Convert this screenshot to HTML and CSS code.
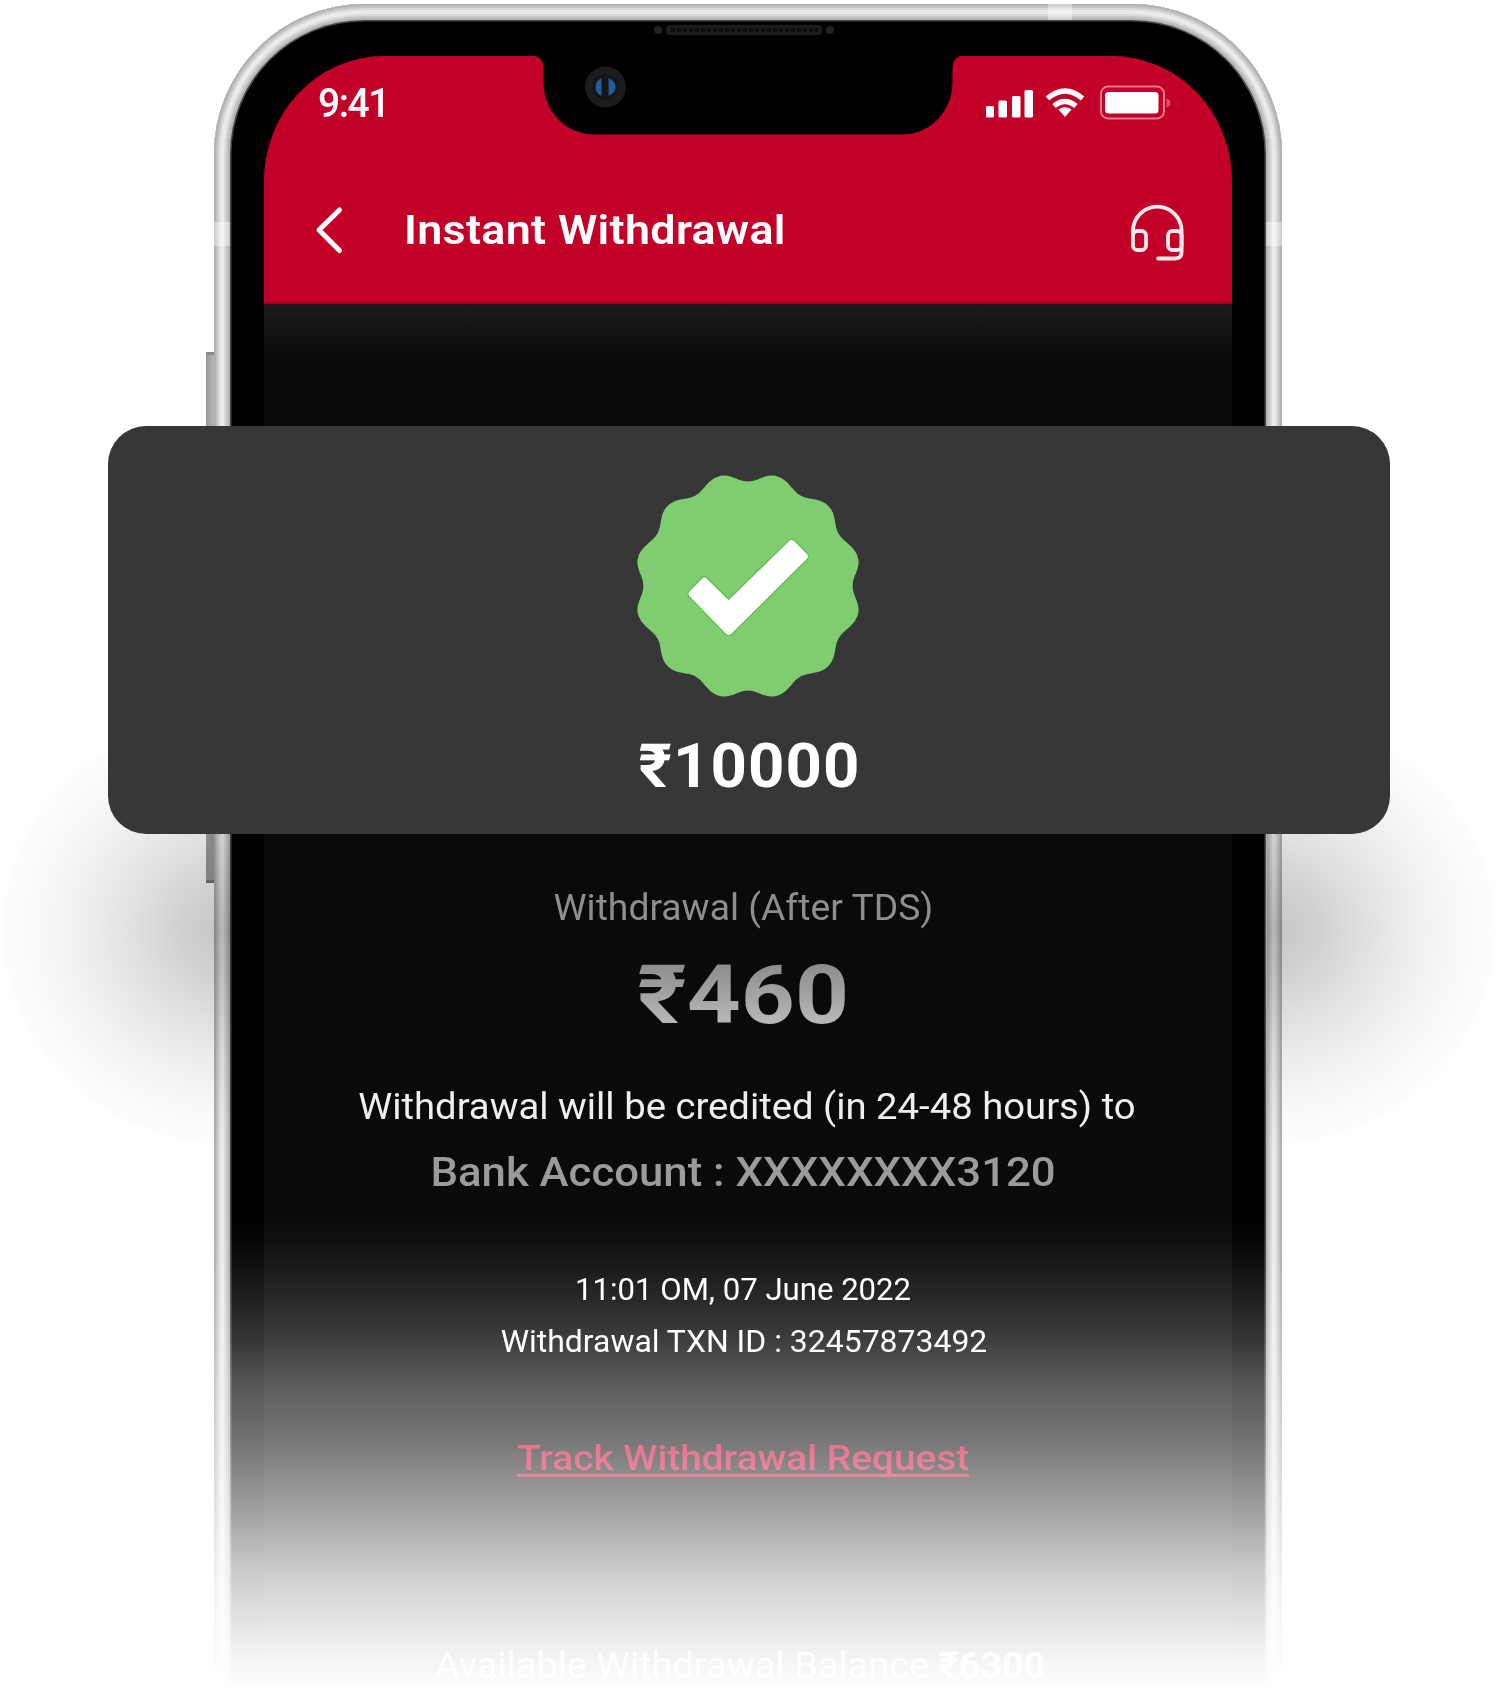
FILE: index.html
```html
<!DOCTYPE html>
<html lang="en">
<head>
<meta charset="utf-8">
<title>Instant Withdrawal</title>
<link rel="stylesheet" href="styles.css">
</head>
<body>
<main class="stage">
  <div class="phone-wrap">
    <i class="side-button side-button-up"></i>
    <i class="side-button side-button-down"></i>
    <div class="phone">
      <i class="antenna antenna-top"></i>
      <i class="antenna antenna-left"></i>
      <i class="antenna antenna-right"></i>
      <div class="screen">
        <header class="app-head">
          <div class="status">
            <span class="time">9:41</span>
            <svg class="status-icons" width="186" height="36" viewBox="985 84 186 36">
              <g fill="#fff">
                <rect x="986" y="106" width="8" height="11.5" rx="1.5"/>
                <rect x="998.5" y="100.500" width="8.500" height="17" rx="1.500"/>
                <rect x="1012" y="96" width="8.500" height="21.500" rx="1.500"/>
                <rect x="1024.500" y="90" width="8.500" height="27.500" rx="1.500"/>
                <path d="M1065 117l-6.500-7.500q6.500-4.500 13 0z"/>
                <rect x="1105" y="92" width="53.500" height="21.500" rx="3.500"/>
              </g>
              <g fill="none" stroke="#fff" stroke-width="5.400">
                <path d="M1047.500 98.500q17.500-15 35 0"/>
                <path d="M1054 106q11-9 22 0"/>
              </g>
              <rect x="1101" y="86.500" width="63" height="32" rx="7" fill="none" stroke="#e07c90" stroke-width="1.900"/>
              <path d="M1166.500 98.500q4 1.500 4 4.500t-4 4.500z" fill="#d8546e"/>
            </svg>
          </div>
          <div class="title-bar">
            <svg class="back" width="30" height="50" viewBox="314 206 30 50" fill="none" stroke="#fff" stroke-width="5" stroke-linecap="round" stroke-linejoin="round"><path d="M339.500 210L319 230l20.500 20.500"/></svg>
            <h1 class="title">Instant Withdrawal</h1>
            <svg class="headset" width="56" height="60" viewBox="1130 203 56 60" fill="none" stroke="#fbe9ec" stroke-width="3.800" stroke-linecap="round" stroke-linejoin="round">
              <path d="M1133 236v-6a24.300 24.300 0 0 1 48.600 0v21q0 6.500-6.500 6.500h-17"/>
              <rect x="1133" y="230" width="13" height="19" rx="4.500"/>
              <rect x="1168" y="230" width="13.500" height="19" rx="4.500"/>
            </svg>
          </div>
        </header>
        <section class="details">
          <p class="label">Withdrawal (After TDS)</p>
          <p class="net">₹460</p>
          <p class="credit">Withdrawal will be credited (in 24-48 hours) to</p>
          <p class="account">Bank Account : XXXXXXXX3120</p>
          <p class="meta date">11:01 OM, 07 June 2022</p>
          <p class="meta txn">Withdrawal TXN ID : 32457873492</p>
          <a class="track">Track Withdrawal Request</a>
          <p class="balance">Available Withdrawal Balance <b>₹6300</b></p>
        </section>
      </div>
      <svg class="notch" width="440" height="120" viewBox="530 20 440 120">
        <path d="M530 55.500q13.500 0 13.500 13v13c0 29 21 53 51 53h307c30 0 51-24 51-53v-13q0-13 13-13z"/>
        <rect x="666" y="25" width="156" height="10" rx="4" fill="#1b1b1b"/>
        <path d="M671 30h147" stroke="#0c0c0c" stroke-width="4" stroke-dasharray="4 2"/>
        <circle cx="658" cy="30" r="4" fill="#242021"/>
        <circle cx="830" cy="30" r="4" fill="#242021"/>
        <circle cx="605.500" cy="87" r="20.500" fill="#1c1c1c"/>
        <circle cx="605.500" cy="87" r="13" fill="#121616"/>
        <path d="M601.500 78v18q-6-3-6-9t6-9zM608.500 78v18q7-3 7-9t-7-9z" fill="#245b9b"/>
      </svg>
    </div>
  </div>
  <i class="glow glow-left"></i>
  <i class="glow glow-right"></i>
  <section class="card">
    <svg class="badge" width="224" height="224" viewBox="-113 -113 226 226">
      <defs>
        <path id="lobes" d="M0 0V-105.500C10-105.500 17-113.400 27.600-111.200C40.200-108.500 44.100-96.400 52.750-91.400C61.400-86.400 72.200-89.700 80.900-81C89.700-72.300 86.400-61.400 91.400-52.750C96.400-44.100 108.500-40.200 111.200-27.600C113.400-17 105.500-10 105.500 0z"/>
      </defs>
      <g fill="#7fcd70">
        <use href="#lobes"/>
        <use href="#lobes" transform="rotate(90)"/>
        <use href="#lobes" transform="rotate(180)"/>
        <use href="#lobes" transform="rotate(270)"/>
        <circle r="105.300"/>
      </g>
      <g stroke-linejoin="round">
        <path d="M-56 8L-44-4.500L-19.500 19.500L44-42.500L56.500-30L-19.500 45.500z" fill="none" stroke="#67c154" stroke-width="10.500"/>
        <path d="M-56 8L-44-4.500L-19.500 19.500L44-42.500L56.500-30L-19.500 45.500z" fill="#fff" stroke="#fff" stroke-width="7.500"/>
      </g>
    </svg>
    <p class="amount">₹10000</p>
  </section>
</main>
</body>
</html>
```
FILE: styles.css
```css
* { box-sizing: border-box; }
body { margin: 0; background: #fff; font-family: Roboto, "Liberation Sans", sans-serif; }
p, h1 { margin: 0; white-space: nowrap; }
i { display: block; }
svg { display: block; }

.stage { position: relative; width: 1500px; height: 1700px; overflow: hidden; }

.phone-wrap {
  --fade: linear-gradient(#000 1216px, rgba(0,0,0,.975) 1236px, rgba(0,0,0,.93) 1266px, rgba(0,0,0,.875) 1296px, rgba(0,0,0,.78) 1339px, rgba(0,0,0,.675) 1376px, rgba(0,0,0,.55) 1438px, rgba(0,0,0,.35) 1516px, rgba(0,0,0,.235) 1556px, rgba(0,0,0,.15) 1596px, rgba(0,0,0,.075) 1636px, rgba(0,0,0,.035) 1660px, transparent 1688px);
  position: relative;
  width: 1068px;
  height: 1696px;
  margin: 4px 0 0 214px;
  mask-image: var(--fade);
  mask-clip: no-clip;
}
.phone {
  position: relative;
  height: 1850px;
  padding: 52px 50px 0;
  border-radius: 150px 150px 0 0;
  background: #000;
  box-shadow:
    inset 0 0 0 2px #b2b2b2, inset 0 0 0 4px #c4c4c4, inset 0 0 0 6px #d8d8d8,
    inset 0 0 0 10px #ebebeb, inset 0 0 0 12px #dadada, inset 0 0 0 14px #c8c8c8,
    inset 0 0 0 16px #b4b4b4, inset 0 0 0 17.500px #484848;
}
.side-button { position: absolute; left: -8px; width: 8px; background: linear-gradient(90deg, #999, #aaa 60%, #b4b4b4); }
.side-button-up { top: 348px; height: 150px; border-top: 3px solid #888; }
.side-button-down { top: 700px; height: 179px; border-bottom: 3px solid #777; background: #9c9c9c; }
.antenna { position: absolute; background: rgba(255,255,255,.4); }
.antenna-top { left: 834px; top: 0; width: 24px; height: 16px; }
.antenna-left { left: 0; top: 218px; width: 16px; height: 24px; }
.antenna-right { right: 0; top: 218px; width: 16px; height: 24px; }

.screen {
  height: 1798px;
  overflow: hidden;
  border-radius: 120px 120px 0 0 / 125px 125px 0 0;
  background: linear-gradient(#0a0a0a 247px, #1c1c1c 248px, #131313 275px, #0a0a0a 305px);
}
.notch { position: absolute; left: 316px; top: 16px; }

.app-head { height: 248px; background: #c30028; border-bottom: 2px solid #a40022; color: #fff; }
.status { display: flex; justify-content: space-between; align-items: flex-start; height: 128px; padding: 28px 61px 0 54px; }
.time { font-size: 41px; line-height: 38px; font-weight: 500; letter-spacing: -1.500px; transform: scaleX(.95); transform-origin: left; }
.title-bar { display: flex; align-items: center; height: 94px; padding: 0 46px 0 50px; }
.title { margin-left: 60px; font-size: 40px; line-height: 48px; font-weight: 600; letter-spacing: .3px; transform: scaleX(1.12); transform-origin: left; }
.headset { margin: 5px 0 0 auto; }

.details { display: flex; flex-direction: column; align-items: center; padding: 582px 9px 0 0; }
.label { font-size: 37px; line-height: 44px; color: #8e8e8e; transform: scaleX(1.008); }
.net {
  margin-top: 16px; font-size: 82px; line-height: 98px; font-weight: 700; transform: scaleX(1.15);
  color: transparent; background: linear-gradient(#8f8d8e 20%, #b9b9b9 80%); background-clip: text;
}
.credit { margin: 41px -20px 0 -13px; font-size: 37px; line-height: 44px; color: #efefef; transform: scaleX(1.034); }
.account { margin-top: 20px; font-size: 40px; line-height: 48px; font-weight: 500; color: #9b9b9b; transform: scaleX(1.093); }
.meta { font-size: 31.500px; line-height: 38px; color: #fff; }
.date { margin-top: 74px; transform: scaleX(.988); }
.txn { margin-top: 14px; transform: scaleX(1.014); }
.track { margin-top: 77px; font-size: 35px; line-height: 42px; font-weight: 500; color: #d00030; text-decoration: underline; text-decoration-thickness: 2.5px; text-underline-offset: 4px; text-decoration-skip-ink: none; white-space: nowrap; transform: scaleX(1.108); }
.balance { margin: 164px 6px 0 0; font-size: 37px; line-height: 44px; color: #fff; transform: scaleX(1.024); }

.glow {
  --stops: rgba(0,0,0,.23), rgba(0,0,0,.18) 22%, rgba(0,0,0,.12) 42%, rgba(0,0,0,.08) 58%, rgba(0,0,0,.045) 74%, rgba(0,0,0,.018) 88%, rgba(0,0,0,.01) 97%, transparent;
  position: absolute; top: 700px; width: 231px; height: 460px;
}
.glow-left { left: 0; background: radial-gradient(ellipse 231px 217px at 231px 230px, var(--stops)); }
.glow-right { right: 2px; background: radial-gradient(ellipse 231px 217px at 0 230px, var(--stops)); }

.card {
  position: absolute; left: 108px; top: 426px; width: 1282px; height: 408px;
  display: flex; flex-direction: column; align-items: center;
  padding: 48px 2px 0 0;
  border-radius: 38px; background: #373737; color: #fff;
}
.amount { margin: 32px 0 0 4px; font-size: 61px; line-height: 72px; font-weight: 700; letter-spacing: 1px; transform: scaleX(1.042); }
```
